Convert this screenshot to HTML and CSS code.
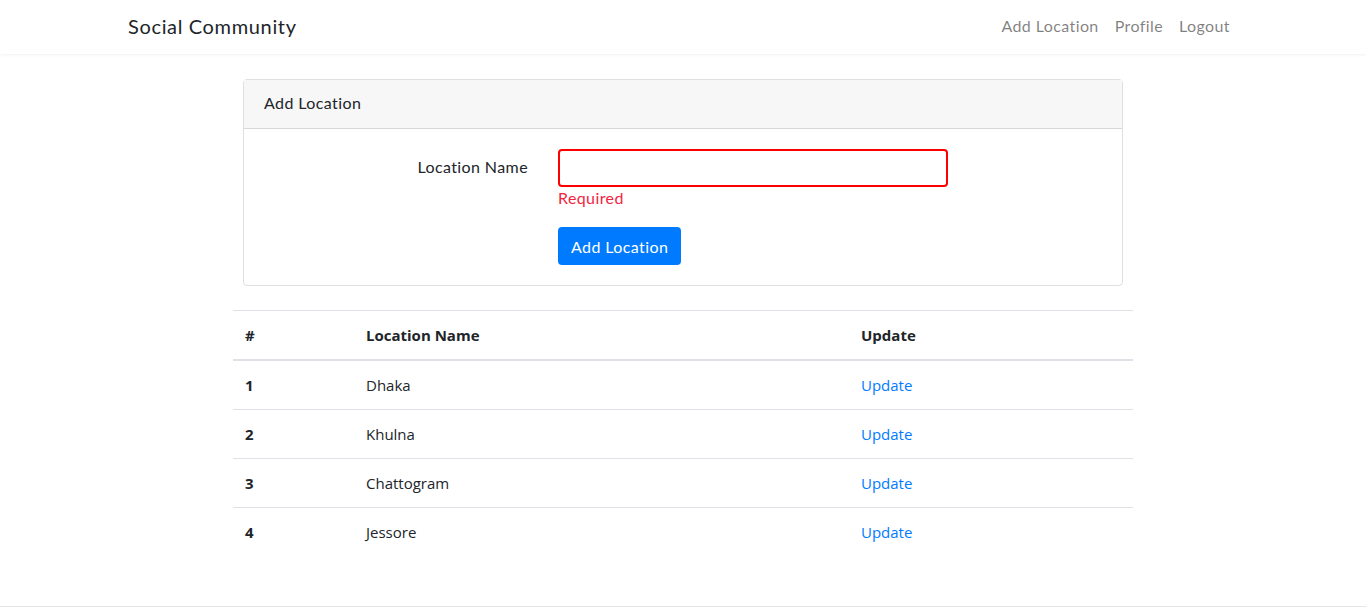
FILE: index.html
```html
<!DOCTYPE html>
<html lang="en">
<head>
    <meta charset="UTF-8">
    <meta name="viewport" content="width=device-width, initial-scale=1.0">
    <title>Social Community - Add Location</title>
    <link rel="stylesheet" href="styles.css">
</head>
<body>
    <nav class="navbar">
        <div class="nav-inner">
            <a class="brand" href="#">Social Community</a>
            <ul class="nav-links">
                <li><a href="#">Add Location</a></li>
                <li><a href="#">Profile</a></li>
                <li><a href="#">Logout</a></li>
            </ul>
        </div>
    </nav>

    <main class="page">
        <div class="card">
            <div class="card-header">Add Location</div>
            <div class="card-body">
                <form class="form-row" onsubmit="return false;">
                    <label for="location_name">Location Name</label>
                    <div class="field">
                        <input type="text" id="location_name" class="invalid">
                        <div class="error">Required</div>
                        <button type="submit" class="btn">Add Location</button>
                    </div>
                </form>
            </div>
        </div>

        <table class="table">
            <thead>
                <tr>
                    <th class="col-num">#</th>
                    <th class="col-name">Location Name</th>
                    <th>Update</th>
                </tr>
            </thead>
            <tbody>
                <tr><th>1</th><td>Dhaka</td><td><a href="#">Update</a></td></tr>
                <tr><th>2</th><td>Khulna</td><td><a href="#">Update</a></td></tr>
                <tr><th>3</th><td>Chattogram</td><td><a href="#">Update</a></td></tr>
                <tr><th>4</th><td>Jessore</td><td><a href="#">Update</a></td></tr>
            </tbody>
        </table>
    </main>

    <footer class="footer"></footer>
</body>
</html>
```

FILE: styles.css
```css
body { margin: 0; font-family: Lato, "Liberation Sans", sans-serif; color: #212529; background: #fff; font-size: 16px; line-height: 1.5; letter-spacing: 0.4px; }
a { text-decoration: none; }

.navbar { height: 54px; background: #fff; box-shadow: 0 1px 3px rgba(0, 0, 0, 0.06); }
.nav-inner { width: 1110px; margin: 0 auto; height: 100%; padding-bottom: 3px; box-sizing: border-box; display: flex; align-items: center; justify-content: space-between; }
.brand { font-size: 20px; color: #212529; letter-spacing: 0.65px; }
.nav-links { list-style: none; margin: 0; padding: 0; display: flex; margin-right: 0; }
.nav-links a { display: block; padding: 0 8px; color: rgba(0, 0, 0, 0.5); font-size: 16px; }

.page { width: 900px; margin: 25px auto 0; padding-bottom: 50px; }

.card { margin: 0 10px; border: 1px solid rgba(0, 0, 0, 0.125); border-radius: 4px; }
.card-header { background: #f7f7f7; padding: 11px 20px 13px; border-bottom: 1px solid rgba(0, 0, 0, 0.125); }
.card-body { padding: 20px; }

.form-row { display: grid; grid-template-columns: 264px 390px; column-gap: 30px; }
.form-row label { text-align: right; padding-top: 6px; }
.field input { display: block; box-sizing: border-box; width: 100%; height: 38px; border: 1px solid #ced4da; border-radius: 4px; padding: 6px 12px; font-size: 16px; }
.field input.invalid { border: 2px solid #f00; }
.error { color: #f1253f; margin-top: -1px; }
.btn { margin-top: 17px; height: 38px; padding: 0 13px; background: #007bff; color: #fff; border: none; border-radius: 4px; font-family: inherit; letter-spacing: inherit; font-size: 16px; cursor: pointer; }

.table { width: 100%; border-collapse: collapse; margin-top: 24px; font-family: "Open Sans", "Noto Sans", sans-serif; font-size: 15px; letter-spacing: 0; }
.table th, .table td { text-align: left; padding: 12px; border-top: 1px solid #dee2e6; line-height: 24px; }
.table thead th { border-bottom: 2px solid #dee2e6; }
.table th { font-weight: 700; }
.table td { font-weight: 400; }
.table a { color: #007bff; }
.col-num { width: 97px; }
.col-name { width: 471px; }

.footer { border-top: 1px solid #e5e5e5; height: 1px; }
```
